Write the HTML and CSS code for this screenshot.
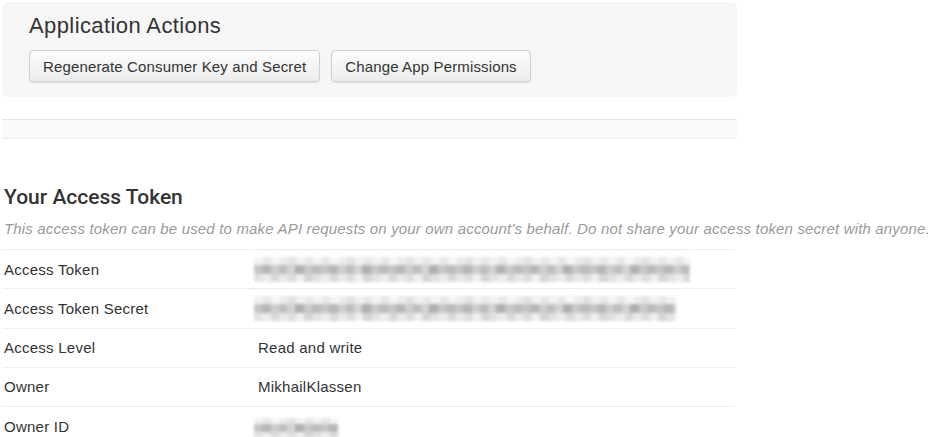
FILE: index.html
```html
<!DOCTYPE html>
<html>
<head>
<meta charset="utf-8">
<title>Application</title>
<link rel="stylesheet" href="styles.css">
</head>
<body>
<div class="page">
  <section class="panel">
    <h2 class="panel-title">Application Actions</h2>
    <div class="actions">
      <button class="btn">Regenerate Consumer Key and Secret</button>
      <button class="btn">Change App Permissions</button>
    </div>
  </section>
  <div class="band"></div>
  <h2 class="section-title">Your Access Token</h2>
  <p class="note">This access token can be used to make API requests on your own account's behalf. Do not share your access token secret with anyone.</p>
  <div class="details">
    <div class="row"><span class="label">Access Token</span><span class="value"><span class="redact redact-long"></span></span></div>
    <div class="row"><span class="label">Access Token Secret</span><span class="value"><span class="redact redact-secret"></span></span></div>
    <div class="row"><span class="label">Access Level</span><span class="value">Read and write</span></div>
    <div class="row"><span class="label">Owner</span><span class="value">MikhailKlassen</span></div>
    <div class="row"><span class="label">Owner ID</span><span class="value"><span class="redact redact-short"></span></span></div>
  </div>
</div>
</body>
</html>
```

FILE: styles.css
```css
html, body {
  margin: 0;
  background: #fff;
}
body {
  font-family: "Liberation Sans", Arial, sans-serif;
  color: #333;
}
.page {
  padding: 2px 0 0 2px;
}
.panel {
  width: 735px;
  height: 95px;
  box-sizing: border-box;
  background: #f6f6f6;
  border-radius: 6px;
  padding: 10px 27px 0;
}
.panel-title {
  margin: 0;
  font-size: 22px;
  font-weight: normal;
  letter-spacing: 0.4px;
  line-height: 27px;
  color: #333;
}
.actions {
  display: flex;
  gap: 11px;
  margin-top: 11px;
}
.btn {
  height: 32px;
  padding: 0 13px;
  font-family: "Liberation Sans", Arial, sans-serif;
  font-size: 15px;
  letter-spacing: 0.14px;
  color: #333;
  background: linear-gradient(#fdfdfd, #ececec);
  border: 1px solid #cfcfcf;
  border-radius: 4px;
  box-shadow: 0 1px 1px rgba(0,0,0,0.08);
}
.band {
  width: 735px;
  height: 18px;
  margin-top: 22px;
  background: #f9f9f9;
  border-top: 1px solid #e6e6e6;
  border-bottom: 1px solid #ececec;
}
.section-title {
  margin: 45px 0 0 2px;
  font-family: Roboto, "Liberation Sans", sans-serif;
  font-weight: 500;
  font-size: 21px;
  line-height: 26px;
  color: #333;
}
.note {
  margin: 10px 0 0 2px;
  font-size: 15px;
  letter-spacing: 0.17px;
  font-style: italic;
  color: #9a9a9a;
  line-height: 18px;
  white-space: nowrap;
}
.details {
  width: 733px;
  margin-top: 11px;
}
.row {
  display: flex;
  align-items: center;
  height: 38.25px;
  border-top: 1px solid #eee;
  font-size: 15px;
  letter-spacing: 0.25px;
  color: #333;
}
.label {
  width: 254px;
  padding-left: 2px;
}
.value {
  display: flex;
  align-items: center;
}
.redact {
  display: block;
  height: 25px;
  margin-left: -4px;
  filter: blur(1.4px);
  background-image:
    repeating-linear-gradient(to right, #f2f2f2 0 9px, #e7e7e7 9px 17px, #f5f5f5 17px 26px, #ebebeb 26px 34px, #e2e2e2 34px 42px, #f1f1f1 42px 51px, #e8e8e8 51px 59px),
    repeating-linear-gradient(to right, #c6c6c6 0 8px, #b7b7b7 8px 17px, #cecece 17px 25px, #bebebe 25px 33px, #d3d3d3 33px 41px, #b0b0b0 41px 50px, #c9c9c9 50px 58px, #bcbcbc 58px 67px),
    repeating-linear-gradient(to right, #e2e2e2 0 8px, #ececec 8px 17px, #d9d9d9 17px 25px, #e9e9e9 25px 34px, #dddddd 34px 42px, #f0f0f0 42px 50px, #d6d6d6 50px 59px);
  background-size: 100% 8px, 100% 9px, 100% 8px;
  background-position: 0 0, 0 8px, 0 17px;
  background-repeat: no-repeat;
}
.redact-long { width: 436px; }
.redact-secret { width: 422px; }
.redact-short { width: 84px; height: 20px; margin-top: 4px; background-size: 100% 6px, 100% 8px, 100% 6px; background-position: 0 0, 0 6px, 0 14px; }
```
